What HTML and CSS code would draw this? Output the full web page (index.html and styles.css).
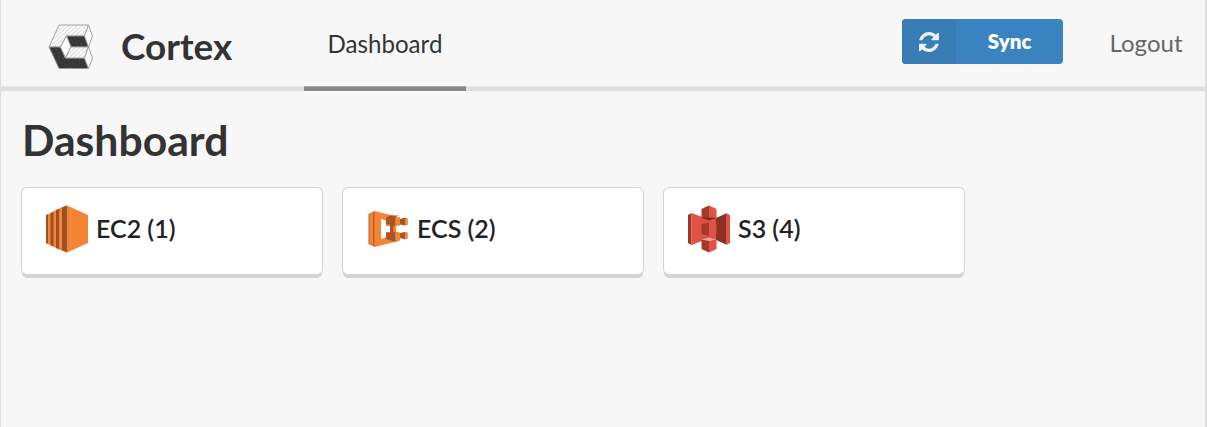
FILE: index.html
```html
<!DOCTYPE html>
<html lang="en">
<head>
<meta charset="utf-8">
<title>Cortex</title>
<link rel="stylesheet" href="styles.css">
</head>
<body>
<header class="topbar">
  <a class="brand">
    <svg class="logo" viewBox="0 0 50 50">
      <defs>
        <pattern id="hatch" width="3" height="3" patternUnits="userSpaceOnUse" patternTransform="rotate(48)"><rect width="3" height="3" fill="#fcfcfc"/><rect width="1" height="3" fill="#dcdcdc"/></pattern>
        <pattern id="rough" width="5" height="5" patternUnits="userSpaceOnUse" patternTransform="rotate(25)"><rect width="5" height="5" fill="#363636"/><rect x="1" y="1" width="1" height="1" fill="#555"/><rect x="3" y="3" width="1" height="1" fill="#484848"/></pattern>
      </defs>
      <g stroke="#9a9a9a" stroke-width=".9" stroke-linejoin="round">
        <path fill="url(#hatch)" d="M13 4H42.500L38.500 15H20.500L14.500 26H3Z"/>
        <path fill="url(#rough)" d="M3 26H14.500L19.500 37H38.500L42.500 47.500H13Z"/>
        <path fill="url(#rough)" d="M20.500 15H38.500L42.500 26H25Z"/>
        <path fill="#fdfdfd" d="M20.500 15L25 26L19.500 37L14.500 26Z"/>
        <path fill="url(#hatch)" d="M25 26H42.500L38.500 37H19.500Z"/>
        <path fill="#fdfdfd" d="M42.500 4L46.500 15L42.500 26L38.500 15Z"/>
        <path fill="#fdfdfd" d="M42.500 26L46.500 37L42.500 47.500L38.500 37Z"/>
      </g>
    </svg>
    <span class="name">Cortex</span>
  </a>
  <nav class="tabs"><a class="tab">Dashboard</a></nav>
  <div class="actions">
    <button class="sync">
      <span class="sync-icon"><svg viewBox="0 0 1536 1536"><path fill="currentColor" d="M1511 928q0 5-1 7-64 268-268 434.500T764 1536q-146 0-282.500-55T238 1324l-129 129q-19 19-45 19t-45-19-19-45V960q0-26 19-45t45-19h448q26 0 45 19t19 45-19 45l-137 137q71 66 161 102t187 36q134 0 250-65t186-179q11-17 53-117 8-23 30-23h192q13 0 22.500 9.500t9.500 22.500zm25-800v448q0 26-19 45t-45 19h-448q-26 0-45-19t-19-45 19-45l138-138Q969 256 768 256q-134 0-250 65T332 500q-11 17-53 117-8 23-30 23H50q-13 0-22.500-9.500T18 608v-7q65-268 270-434.500T768 0q146 0 284 55.500T1297 212l130-129q19-19 45-19t45 19 19 45z"/></svg></span>
      <span class="sync-label">Sync</span>
    </button>
    <a class="logout">Logout</a>
  </div>
</header>
<main class="content">
  <h1 class="title">Dashboard</h1>
  <div class="cards">
    <a class="card">
      <svg class="service" viewBox="0 0 48 48">
        <path fill="#f58536" d="M3 10L6 9L11 6L17 3L24 .5V47.500L17 45L11 42L6 39.500L3 38Z"/>
        <path fill="#9d5025" d="M3 10L5 9.200V39L3 38ZM7.500 8L10.500 7V41.500L7.500 40ZM13 5L16 4V44L13 43ZM19 2.500L24 .5V47.500L19 45Z"/>
        <path fill="#f58536" d="M24 .5L45 10V38L24 47.500Z"/>
      </svg>
      <span>EC2 (1)</span>
    </a>
    <a class="card">
      <svg class="service" viewBox="0 0 48 48">
        <path fill="#b9622b" d="M4.500 9L11 6V42L4.500 39Z"/>
        <path fill="#f58536" d="M5.500 8.500L9 7.800V40L5.500 39.500ZM10.500 6L33 11.500V21H32V27H33V36.500L10.500 42ZM17 14V34L22 32.500V27H26V21H22V15.500Z" fill-rule="evenodd"/>
        <path fill="#a85628" d="M22 12.500L26 10.500H35L31.500 12V21L22 19ZM22 28L31.500 26.500V37L22 34ZM26 20H29.500V27.500H26ZM36 14L39 13H43.500L41 14.500V20.500L36 19.500ZM36 28L41 27V34.500L36 33Z"/>
        <path fill="#f58536" d="M31.500 12.500L36 12V20.500L31.500 21ZM31.500 26.500L36 27.500V35.500L31.500 37ZM41 14.500L43.800 13.500V20L41 20.500ZM41 27L43.800 27.500V33.500L41 34.500ZM29.500 21H32V27H29.500Z"/>
      </svg>
      <span>ECS (2)</span>
    </a>
    <a class="card">
      <svg class="service" viewBox="0 0 48 48">
        <path fill="#9c3427" d="M3 10L6.500 8V40L3 38Z"/>
        <path fill="#e05243" d="M6.500 8L17 12H31V36H17L6.500 40ZM41 8L45 10V38L41 40Z"/>
        <path fill="#8c3123" d="M31 13L41 8.500V39.500L31 35Z"/>
        <path fill="#a5382b" d="M16.500 4L24 .5V15L16.500 13ZM16.500 19L24 17.500V31L16.500 29ZM16.500 35L24 34V47.500L16.500 44Z"/>
        <path fill="#e05243" d="M24 .5L31.500 4V13L24 15ZM24 17.500L31.500 19V29L24 31ZM24 34L31.500 35V44L24 47.500Z"/>
        <path fill="#7a2a20" d="M16.500 13L24 12.500L31.500 13L24 15.500Z"/>
        <path fill="#f0a8a0" d="M16.500 34.500L24 32.800L31.500 34.500L24 36Z"/>
      </svg>
      <span>S3 (4)</span>
    </a>
  </div>
</main>
</body>
</html>
```
FILE: styles.css
```css
* { box-sizing: border-box; }
body { margin: 0; height: 427px; background: #f7f7f7; border-left: 1px solid #dedede; border-right: 2px solid #dedede; font-family: Lato, sans-serif; color: #333; overflow: hidden; }
.topbar { display: flex; height: 91px; border-bottom: 4px solid #dedede; box-shadow: inset 0 -1px #e9e9e9; }
.brand { display: flex; align-items: center; width: 303px; padding: 4px 0 0 45px; }
.logo { width: 50px; height: 50px; }
.name { margin-left: 25px; font-size: 36.900px; font-weight: 700; }
.tabs { display: flex; }
.tab { width: 162px; height: 91px; border-bottom: 4px solid #888; box-shadow: inset 0 -1px #a9a9a9; text-align: center; font-size: 24.100px; line-height: 87px; }
.actions { display: flex; margin-left: auto; padding: 19px 22.500px 0 0; }
.sync { display: flex; width: 161px; height: 45px; padding: 0; border: 0; border-radius: 4px; overflow: hidden; background: #3b83c0; color: #fff; font: 800 20.500px Lato, sans-serif; }
.sync-icon { display: flex; align-items: center; justify-content: center; width: 54px; height: 45px; background: #387db6; }
.sync-icon svg { width: 20px; height: 20px; opacity: .9; }
.sync-label { flex: 1; line-height: 45px; }
.logout { margin-left: 46.500px; color: #666; font-size: 24px; line-height: 48px; }
.content { padding: 20px 21px; }
.title { margin: 0; font-size: 42.700px; line-height: 57px; font-weight: 700; }
.cards { display: flex; gap: 21px; margin-top: 20px; }
.card { display: flex; align-items: center; width: 300px; height: 86px; padding: 0 0 6px 21px; background: #fff; border-radius: 5px; box-shadow: 0 0 0 1px #d4d4d5, 0 4px 0 #d4d4d5; font-size: 25px; font-weight: 600; color: #222; }
.service { width: 48px; height: 48px; margin: 2px 5px 0 0; }
```
